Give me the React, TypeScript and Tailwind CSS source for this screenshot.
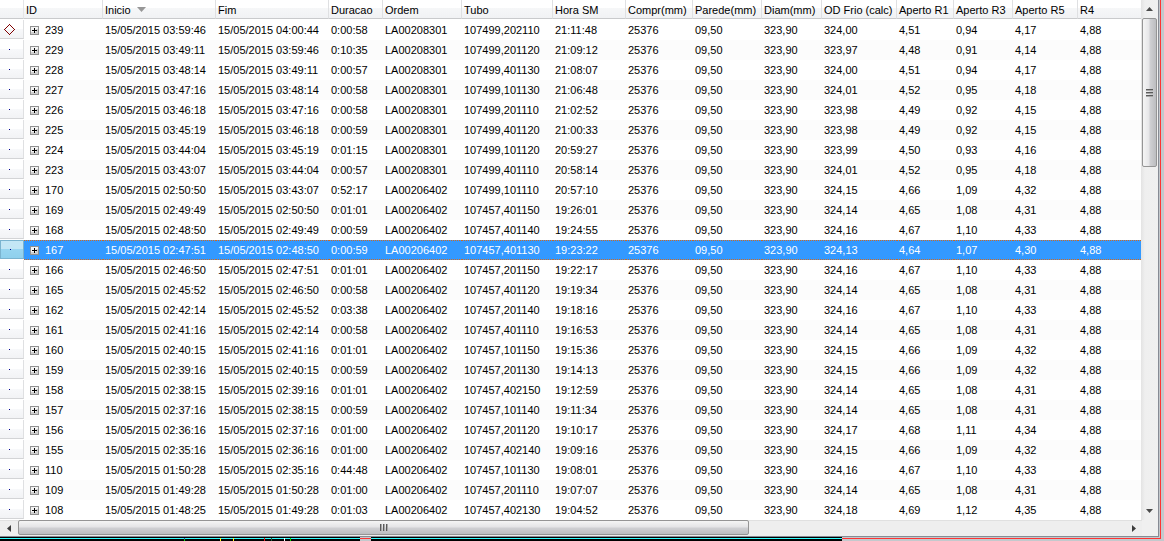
const columns = [
  { label: 'ID', width: 'w-[79px]' },
  { label: 'Inicio', width: 'w-[113px]', sorted: true },
  { label: 'Fim', width: 'w-[113px]' },
  { label: 'Duracao', width: 'w-[54px]' },
  { label: 'Ordem', width: 'w-[79px]' },
  { label: 'Tubo', width: 'w-[91px]' },
  { label: 'Hora SM', width: 'w-[73px]' },
  { label: 'Compr(mm)', width: 'w-[67px]' },
  { label: 'Parede(mm)', width: 'w-[69px]' },
  { label: 'Diam(mm)', width: 'w-[60px]' },
  { label: 'OD Frio (calc)', width: 'w-[75px]' },
  { label: 'Aperto R1', width: 'w-[57px]' },
  { label: 'Aperto R3', width: 'w-[59px]' },
  { label: 'Aperto R5', width: 'w-[65px]' },
  { label: 'R4', width: '' },
];

// id, inicio, fim, duracao, ordem, tubo, hora, od frio, r1, r3, r5
const records = [
  ['239', '03:59:46', '04:00:44', '0:00:58', 'LA00208301', '107499,202110', '21:11:48', '324,00', '4,51', '0,94', '4,17'],
  ['229', '03:49:11', '03:59:46', '0:10:35', 'LA00208301', '107499,201120', '21:09:12', '323,97', '4,48', '0,91', '4,14'],
  ['228', '03:48:14', '03:49:11', '0:00:57', 'LA00208301', '107499,401130', '21:08:07', '324,00', '4,51', '0,94', '4,17'],
  ['227', '03:47:16', '03:48:14', '0:00:58', 'LA00208301', '107499,101130', '21:06:48', '324,01', '4,52', '0,95', '4,18'],
  ['226', '03:46:18', '03:47:16', '0:00:58', 'LA00208301', '107499,201110', '21:02:52', '323,98', '4,49', '0,92', '4,15'],
  ['225', '03:45:19', '03:46:18', '0:00:59', 'LA00208301', '107499,401120', '21:00:33', '323,98', '4,49', '0,92', '4,15'],
  ['224', '03:44:04', '03:45:19', '0:01:15', 'LA00208301', '107499,101120', '20:59:27', '323,99', '4,50', '0,93', '4,16'],
  ['223', '03:43:07', '03:44:04', '0:00:57', 'LA00208301', '107499,401110', '20:58:14', '324,01', '4,52', '0,95', '4,18'],
  ['170', '02:50:50', '03:43:07', '0:52:17', 'LA00206402', '107499,101110', '20:57:10', '324,15', '4,66', '1,09', '4,32'],
  ['169', '02:49:49', '02:50:50', '0:01:01', 'LA00206402', '107457,401150', '19:26:01', '324,14', '4,65', '1,08', '4,31'],
  ['168', '02:48:50', '02:49:49', '0:00:59', 'LA00206402', '107457,401140', '19:24:55', '324,16', '4,67', '1,10', '4,33'],
  ['167', '02:47:51', '02:48:50', '0:00:59', 'LA00206402', '107457,401130', '19:23:22', '324,13', '4,64', '1,07', '4,30'],
  ['166', '02:46:50', '02:47:51', '0:01:01', 'LA00206402', '107457,201150', '19:22:17', '324,16', '4,67', '1,10', '4,33'],
  ['165', '02:45:52', '02:46:50', '0:00:58', 'LA00206402', '107457,401120', '19:19:34', '324,14', '4,65', '1,08', '4,31'],
  ['162', '02:42:14', '02:45:52', '0:03:38', 'LA00206402', '107457,201140', '19:18:16', '324,16', '4,67', '1,10', '4,33'],
  ['161', '02:41:16', '02:42:14', '0:00:58', 'LA00206402', '107457,401110', '19:16:53', '324,14', '4,65', '1,08', '4,31'],
  ['160', '02:40:15', '02:41:16', '0:01:01', 'LA00206402', '107457,101150', '19:15:36', '324,15', '4,66', '1,09', '4,32'],
  ['159', '02:39:16', '02:40:15', '0:00:59', 'LA00206402', '107457,201130', '19:14:13', '324,15', '4,66', '1,09', '4,32'],
  ['158', '02:38:15', '02:39:16', '0:01:01', 'LA00206402', '107457,402150', '19:12:59', '324,14', '4,65', '1,08', '4,31'],
  ['157', '02:37:16', '02:38:15', '0:00:59', 'LA00206402', '107457,101140', '19:11:34', '324,14', '4,65', '1,08', '4,31'],
  ['156', '02:36:16', '02:37:16', '0:01:00', 'LA00206402', '107457,201120', '19:10:17', '324,17', '4,68', '1,11', '4,34'],
  ['155', '02:35:16', '02:36:16', '0:01:00', 'LA00206402', '107457,402140', '19:09:16', '324,15', '4,66', '1,09', '4,32'],
  ['110', '01:50:28', '02:35:16', '0:44:48', 'LA00206402', '107457,101130', '19:08:01', '324,16', '4,67', '1,10', '4,33'],
  ['109', '01:49:28', '01:50:28', '0:01:00', 'LA00206402', '107457,201110', '19:07:07', '324,14', '4,65', '1,08', '4,31'],
  ['108', '01:48:25', '01:49:28', '0:01:03', 'LA00206402', '107457,402130', '19:04:52', '324,18', '4,69', '1,12', '4,35'],
];

const selectedId = '167';
const day = '15/05/2015';

// dotted focus line along the top and bottom of the selected row
const focusLine =
  'bg-[image:repeating-linear-gradient(to_right,#d2691e_0px,#d2691e_1px,transparent_1px,transparent_2px),repeating-linear-gradient(to_right,#d2691e_0px,#d2691e_1px,transparent_1px,transparent_2px)] bg-[length:100%_1px] bg-[position:top_left,bottom_left] bg-no-repeat';

function ExpandButton({ id }: { id: string }) {
  return (
    <button type="button" aria-label={`Expandir ${id}`} className="block shrink-0">
      <svg width="9" height="9" viewBox="0 0 9 9" shapeRendering="crispEdges">
        <rect width="9" height="9" fill="#919191" />
        <rect x="1" y="1" width="7" height="7" fill="#f4f4f4" />
        <path d="M1 6h7v2H1zM6 3h2v3H6z" fill="#d0d0d0" />
        <path d="M2 4h5v1H2zM4 2h1v5H4z" fill="#000" />
      </svg>
    </button>
  );
}

function RowMarker({ current }: { current: boolean }) {
  return (
    <svg width="11" height="11" viewBox="0 0 11 11" className="ml-1" shapeRendering="crispEdges">
      {current ? (
        <path
          d="M5 0h1v1H5zM4 1h1v1H4zM6 1h1v1H6zM3 2h1v1H3zM7 2h1v1H7zM2 3h1v1H2zM8 3h1v1H8zM1 4h1v1H1zM9 4h1v1H9zM0 5h1v1H0zM10 5h1v1h-1zM1 6h1v1H1zM9 6h1v1H9zM2 7h1v1H2zM8 7h1v1H8zM3 8h1v1H3zM7 8h1v1H7zM4 9h1v1H4zM6 9h1v1H6zM5 10h1v1H5z"
          fill="#800000"
        />
      ) : (
        <rect x="5" y="5" width="1" height="1" fill="#000090" />
      )}
    </svg>
  );
}

function Grid() {
  return (
    <table className="w-full table-fixed border-collapse text-left text-[11px] leading-5 whitespace-nowrap text-black">
      <colgroup>
        <col className="w-[24px]" />
        {columns.map((c) => (
          <col key={c.label} className={c.width} />
        ))}
      </colgroup>
      <thead>
        <tr className="h-5">
          <th className="p-0">
            <div className="h-5 border-b border-white">
              <div className="h-[19px] border-r border-b border-r-[#e4e5e7] border-b-[#c9cacc] bg-[linear-gradient(to_bottom,#ffffff_8px,#f6f7f8_8px,#f1f2f4)]" />
            </div>
          </th>
          {columns.map((c, i) => (
            <th key={c.label} className="p-0 font-normal" aria-sort={c.sorted ? 'descending' : undefined}>
              <div className="h-5 border-b border-white">
                <div
                  className={`flex h-[19px] items-center gap-[6px] border-b border-r-[#dfe0e2] border-b-[#c9cacc] bg-[linear-gradient(to_bottom,#ffffff_8px,#f6f7f8_8px,#f1f2f4)] pt-[2px] pl-[2px] ${i < columns.length - 1 ? 'border-r' : ''}`}
                >
                  {c.label}
                  {c.sorted && (
                    <svg width="9" height="5" viewBox="0 0 9 5" className="mb-[2px]">
                      <path d="M0 0h9L4.5 5z" fill="#979797" />
                    </svg>
                  )}
                </div>
              </div>
            </th>
          ))}
        </tr>
      </thead>
      <tbody>
        {records.map((r, i) => {
          const [id, inicio, fim, duracao, ordem, tubo, hora, od, r1, r3, r5] = r;
          const selected = id === selectedId;
          const cells = [`${day} ${inicio}`, `${day} ${fim}`, duracao, ordem, tubo, hora, '25376', '09,50', '323,90', od, r1, r3, r5, '4,88'];
          const line = selected ? focusLine : '';
          return (
            <tr
              key={id}
              aria-selected={selected}
              className={selected ? 'h-5 bg-[#3399ff] text-white' : i % 2 ? 'h-5 bg-[#fcfcfc]' : 'h-5 bg-white'}
            >
              <td className="bg-white p-0">
                <div className="h-5 pb-px">
                  <div
                    className={
                      selected
                        ? 'flex h-[19px] items-center border border-[#7ab3cf] bg-[linear-gradient(to_bottom,#c3e6f5_8px,#97d5f0_8px,#8fd0ed)]'
                        : 'flex h-[19px] items-center border-r border-b border-r-[#dfe0e2] border-b-[#d3d4d6] bg-[linear-gradient(to_bottom,#ffffff_9px,#f7f8fa_9px,#f2f3f5)]'
                    }
                  >
                    <RowMarker current={i === 0} />
                  </div>
                </div>
              </td>
              <td className="p-0">
                <div className={`flex h-5 items-center gap-[6px] pl-[6px] ${line}`}>
                  <ExpandButton id={id} />
                  {id}
                </div>
              </td>
              {cells.map((text, n) => (
                <td key={n} className="p-0">
                  <div className={`h-5 pl-[2px] ${line}`}>{text}</div>
                </td>
              ))}
            </tr>
          );
        })}
      </tbody>
    </table>
  );
}

function VerticalScrollbar() {
  return (
    <div className="flex w-[17px] shrink-0 flex-col bg-[linear-gradient(to_right,#e3e3e3,#efefef_4px,#f0f0f0)]">
      <button type="button" aria-label="Rolar para cima" className="flex h-[18px] shrink-0 items-center justify-center">
        <svg width="7" height="4" viewBox="0 0 7 4">
          <path d="M3.5 0L7 4H0z" fill="#4a4a4a" />
        </svg>
      </button>
      <div className="ml-px flex h-[149px] w-[15px] items-center justify-center rounded-[2px] border border-[#959595] bg-[linear-gradient(to_right,#f5f5f5,#e6e6e8_6px,#d0d0d3_7px,#bcbdc0)]">
        <svg width="7" height="8" viewBox="0 0 7 8" shapeRendering="crispEdges">
          <path d="M0 0h7v1H0zM0 3h7v1H0zM0 6h7v1H0z" fill="#5b5b5b" />
          <path d="M0 1h7v1H0zM0 4h7v1H0zM0 7h7v1H0z" fill="#a8a8a8" />
        </svg>
      </div>
      <div className="flex-1" />
      <button type="button" aria-label="Rolar para baixo" className="flex h-[18px] shrink-0 items-center justify-center">
        <svg width="7" height="4" viewBox="0 0 7 4">
          <path d="M0 0h7L3.5 4z" fill="#4a4a4a" />
        </svg>
      </button>
    </div>
  );
}

function HorizontalScrollbar() {
  return (
    <div className="flex h-4 bg-[#eeeeee]">
      <div className="flex flex-1 border-t border-[#e0e0e0]">
        <button type="button" aria-label="Rolar para a esquerda" className="flex w-[18px] shrink-0 items-center justify-center">
          <svg width="4" height="7" viewBox="0 0 4 7">
            <path d="M4 0v7L0 3.5z" fill="#3c3c3c" />
          </svg>
        </button>
        <div className="flex flex-1">
          <div className="-mt-px flex h-[15px] w-[66%] items-center justify-center rounded-[2px] border border-[#959595] bg-[linear-gradient(to_bottom,#f5f5f5,#e4e4e6_6px,#d0d0d3_7px,#bcbdc0)]">
            <svg width="8" height="7" viewBox="0 0 8 7" shapeRendering="crispEdges">
              <path d="M0 0h1v7H0zM3 0h1v7H3zM6 0h1v7H6z" fill="#5b5b5b" />
              <path d="M1 0h1v7H1zM4 0h1v7H4zM7 0h1v7H7z" fill="#a8a8a8" />
            </svg>
          </div>
        </div>
        <button type="button" aria-label="Rolar para a direita" className="flex w-4 shrink-0 items-center justify-center">
          <svg width="4" height="7" viewBox="0 0 4 7">
            <path d="M0 0v7l4-3.5z" fill="#3c3c3c" />
          </svg>
        </button>
      </div>
      <div className="w-4 shrink-0 bg-[#f0f0f0]" />
    </div>
  );
}

// Top edge of the chart that sits under the grid
function ChartStrip() {
  return (
    <div className="flex h-1">
      <svg width="360" height="4" viewBox="0 0 360 4" className="shrink-0" shapeRendering="crispEdges">
        <rect width="360" height="4" fill="#000" />
        <rect y="1" width="360" height="1" fill="#33ffff" />
        <path d="M184 1h1v3h-1zM290 1h1v3h-1z" fill="#00e000" />
        <path d="M184 1h1v1h-1z" fill="#4020e0" />
        <path d="M220 1h1v3h-1zM233 1h1v3h-1z" fill="#ffff20" />
        <path d="M264 1h1v3h-1z" fill="#e02020" />
        <path d="M271 1h1v3h-1z" fill="#206040" />
        <path d="M284 1h1v3h-1z" fill="#fff" />
      </svg>
      <div className="w-[11px] shrink-0 pt-px">
        <div className="h-px bg-[#ff3333]" />
      </div>
      <div className="w-[471px] shrink-0 bg-black pt-px">
        <div className="h-px bg-[#33ffff]" />
      </div>
      <div className="flex-1 pt-px">
        <div className="h-px bg-[#ff3333]" />
      </div>
    </div>
  );
}

export default function App() {
  return (
    <div className="flex bg-[#c3c9cd] font-['Liberation_Sans',Arial,sans-serif]">
      <div className="min-w-0 flex-1">
        <div className="flex">
          <div className="min-w-0 flex-1 bg-white">
            <div className="flex">
              <div className="min-w-0 flex-1">
                <Grid />
              </div>
              <VerticalScrollbar />
            </div>
            <HorizontalScrollbar />
            <div className="h-px bg-[#868b94]" />
          </div>
          <div className="w-px shrink-0 bg-[#868b94]" />
          <div className="w-px shrink-0" />
        </div>
        <ChartStrip />
      </div>
      <div className="w-px shrink-0 pb-[2px]">
        <div className="h-full bg-[#ff3333]" />
      </div>
      <div className="w-[3px] shrink-0" />
    </div>
  );
}
